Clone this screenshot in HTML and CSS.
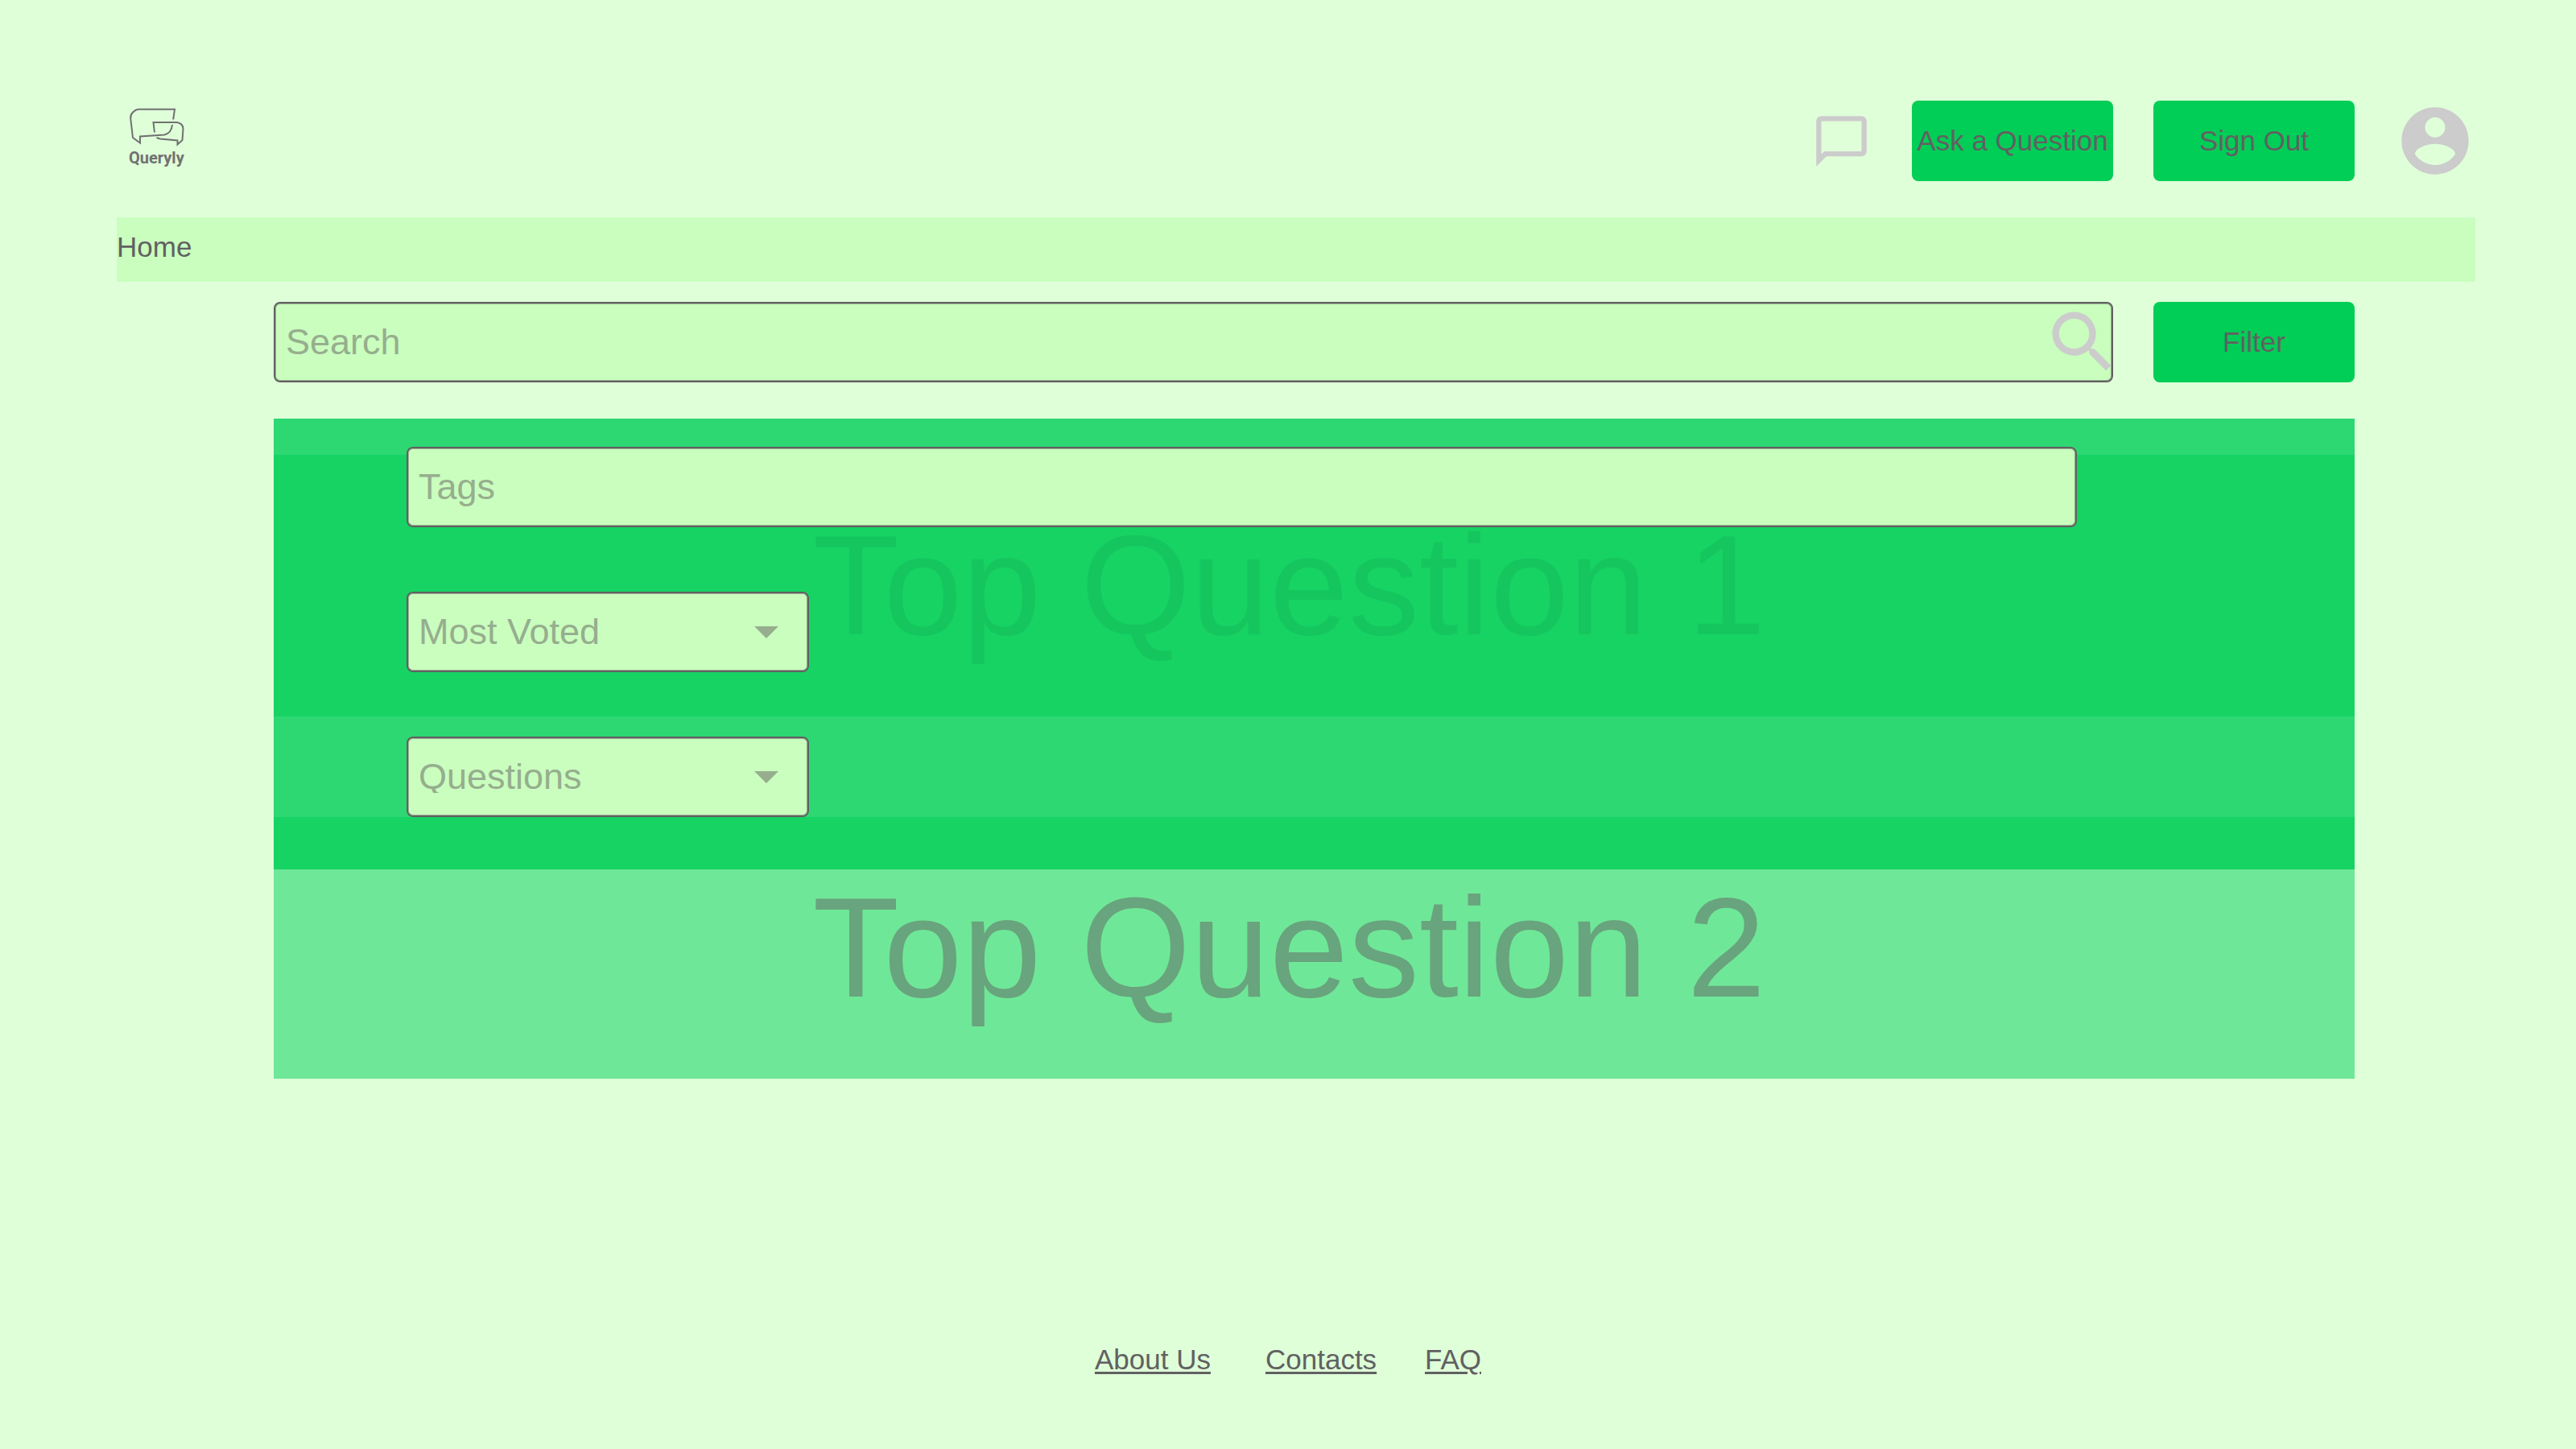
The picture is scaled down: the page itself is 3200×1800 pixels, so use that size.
FILE: index.html
```html
<!DOCTYPE html>
<html lang="en">
<head>
<meta charset="utf-8">
<meta name="viewport" content="width=device-width, initial-scale=1">
<title>Queryly</title>
<link rel="stylesheet" href="styles.css">
</head>
<body class="page">
  <header class="header">
    <a class="logo" href="#">
      <svg class="logo-mark" viewBox="0 0 70 48" aria-hidden="true">
        <path d="M55.200 14.500 L57 1.800 H12 Q8.500 2 5 5.500 Q2 8.500 2.200 13 L5 37 L14 43.500 V35.500 L44 33.500 Q53 31.500 54 21"/>
        <path d="M32 30.500 L30.500 18 H60 Q67.500 19.500 67.500 26 L66.500 40 L60.500 45.500 V40.500 L39 38.500 L34.500 37"/>
      </svg>
      <span class="logo-name">Queryly</span>
    </a>
    <div class="actions">
      <button class="icon-button" type="button" aria-label="Messages">
        <svg class="icon icon-chat" viewBox="0 0 24 24"><path d="M20 2H4c-1.100 0-2 .9-2 2v18l4-4h14c1.100 0 2-.9 2-2V4c0-1.100-.9-2-2-2zm0 14H5.200L4 17.200V4h16v12z"/></svg>
      </button>
      <button class="button" type="button">Ask a Question</button>
      <button class="button" type="button">Sign Out</button>
      <button class="icon-button" type="button" aria-label="Account">
        <svg class="icon icon-account" viewBox="0 0 24 24"><path d="M12 2C6.480 2 2 6.480 2 12s4.480 10 10 10 10-4.480 10-10S17.520 2 12 2zm0 3c1.660 0 3 1.340 3 3s-1.340 3-3 3-3-1.340-3-3 1.340-3 3-3zm0 14.200c-2.500 0-4.710-1.280-6-3.220.03-1.990 4-3.080 6-3.080 1.990 0 5.970 1.090 6 3.080-1.290 1.940-3.500 3.220-6 3.220z"/></svg>
      </button>
    </div>
  </header>

  <nav class="nav"><a class="nav-link" href="#">Home</a></nav>

  <main class="main">
    <form class="search-row">
      <div class="search">
        <input class="field" type="text" placeholder="Search" aria-label="Search">
        <button class="icon-button search-button" type="button" aria-label="Run search">
          <svg class="icon icon-search" viewBox="0 0 24 24"><path d="M15.500 14h-.79l-.28-.27C15.410 12.590 16 11.110 16 9.500 16 5.910 13.090 3 9.500 3S3 5.910 3 9.500 5.910 16 9.500 16c1.610 0 3.090-.59 4.230-1.570l.27.28v.79l5 4.990L20.490 19l-4.990-5zm-6 0C7.010 14 5 11.990 5 9.500S7.010 5 9.500 5 14 7.010 14 9.500 11.990 14 9.500 14z"/></svg>
        </button>
      </div>
      <button class="button" type="button">Filter</button>
    </form>

    <div class="results">
      <article class="question"><h2 class="question-title">Top Question 1</h2></article>
      <article class="question"><h2 class="question-title">Top Question 2</h2></article>

      <form class="filters">
        <input class="field" type="text" placeholder="Tags" aria-label="Tags">
        <div class="select">
          <select class="field" aria-label="Sort by">
            <option>Most Voted</option>
          </select>
          <svg class="caret" viewBox="0 0 30 15" aria-hidden="true"><path d="M0 0h30L15 15z"/></svg>
        </div>
        <div class="select">
          <select class="field" aria-label="Content type">
            <option>Questions</option>
          </select>
          <svg class="caret" viewBox="0 0 30 15" aria-hidden="true"><path d="M0 0h30L15 15z"/></svg>
        </div>
      </form>
    </div>
  </main>

  <footer class="footer">
    <a class="footer-link" href="#">About Us</a>
    <a class="footer-link" href="#">Contacts</a>
    <a class="footer-link" href="#">FAQ</a>
  </footer>
</body>
</html>
```
FILE: styles.css
```css
:root {
  --page: #dfffd9;
  --pale: #c9febe;
  --green: #00ce57;
  --ink: #616161;
  --muted: #96ae8e;
  --icon: #cccccc;
}

*,
*::before,
*::after {
  box-sizing: border-box;
}

.page {
  margin: 0;
  min-height: 100vh;
  padding: 125px 125px 91px 145px;
  display: flex;
  flex-direction: column;
  background: var(--page);
  color: var(--ink);
  font-family: "Liberation Sans", Arial, sans-serif;
  font-size: 35px;
  line-height: 40px;
}

/* Header */
.header {
  display: flex;
  justify-content: space-between;
  align-items: center;
  margin-bottom: 45px;
}

.logo {
  margin-left: 15px;
  padding-bottom: 6px;
  display: flex;
  flex-direction: column;
  color: #717171;
  text-decoration: none;
}

.logo-mark {
  width: 70px;
  height: 48px;
  fill: none;
  stroke: currentColor;
  stroke-width: 2;
}

.logo-name {
  font: 700 20px/28px Roboto, sans-serif;
}

.actions {
  display: flex;
  align-items: center;
  gap: 50px;
}

.button {
  width: 250px;
  height: 100px;
  flex: none;
  padding: 0;
  border: 0;
  border-radius: 8px;
  background: var(--green);
  color: var(--ink);
  font: inherit;
  white-space: nowrap;
}

.icon-button {
  display: flex;
  padding: 0;
  border: 0;
  background: none;
}

.icon {
  width: 100px;
  height: 100px;
  fill: var(--icon);
}

.icon-chat {
  width: 75px;
  height: 75px;
}

/* Navigation */
.nav {
  padding: 17px 0 23px;
  background: var(--pale);
}

.nav-link {
  display: inline-block;
  vertical-align: top;
  color: inherit;
  text-decoration: none;
}

/* Search */
.main {
  padding: 25px 150px 0 195px;
}

.search-row {
  display: flex;
  gap: 50px;
  margin-bottom: 45px;
}

.search {
  flex: 1;
  position: relative;
}

.search-button {
  position: absolute;
  top: 0;
  right: -12px;
}

.field {
  display: block;
  width: 100%;
  height: 100px;
  margin: 0;
  padding: 0 13px;
  border: 2px solid var(--ink);
  border-radius: 8px;
  box-shadow: inset 0 0 0 1px var(--muted);
  background: var(--pale);
  color: var(--muted);
  font: inherit;
  font-size: 45px;
  appearance: none;
}

.field::placeholder {
  color: var(--muted);
  opacity: 1;
}

/* Results, with the filter panel open on top */
.results {
  position: relative;
  padding-top: 45px;
  display: grid;
  gap: 125px;
}

.question {
  padding: 62px 62px 62px 0;
  background: rgb(0 208 88 / 50%);
  text-align: center;
}

.question-title {
  margin: 0;
  color: rgb(97 97 97 / 50%);
  font-size: 176px;
  font-weight: 400;
  line-height: 201px;
}

.filters {
  position: absolute;
  top: 0;
  left: 0;
  right: 0;
  padding: 35px 345px 65px 165px;
  display: grid;
  gap: 80px;
  background: rgb(0 206 87 / 80%);
}

.select {
  width: 500px;
  display: grid;
  align-items: center;
}

.select > * {
  grid-area: 1 / 1;
}

.caret {
  width: 30px;
  height: 15px;
  margin-right: 38px;
  justify-self: end;
  fill: var(--muted);
  pointer-events: none;
}

/* Footer */
.footer {
  margin: auto 0 0;
  padding-right: 20px;
  display: grid;
  grid-template-columns: 212px 198px auto;
  justify-content: center;
}

.footer-link {
  justify-self: start;
  color: inherit;
  text-underline-offset: 3px;
  text-decoration-thickness: 3px;
}
```
